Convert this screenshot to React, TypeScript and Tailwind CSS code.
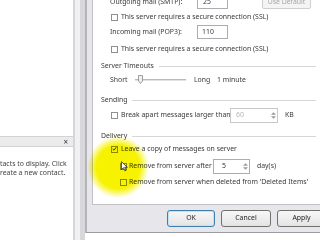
import React from "react";

type BoxProps = { checked?: boolean };

const CheckBox = ({ checked = false }: BoxProps) => (
  <div className="w-[7px] h-[7px] shrink-0 border border-[#8e8f8f] bg-white flex items-center justify-center">
    {checked && (
      <svg viewBox="0 0 7 7" className="w-[6px] h-[6px]">
        <path d="M1 3.4 L2.8 5.2 L6 1.2" fill="none" stroke="#2b2b2b" strokeWidth="1.3" />
      </svg>
    )}
  </div>
);

const SpinArrows = () => (
  <div className="w-[7px] h-full flex flex-col items-center justify-center gap-[1px]">
    <svg viewBox="0 0 6 3" className="w-[5px] h-[3px]">
      <path d="M0 3 L3 0 L6 3 Z" fill="#9a9a9a" />
    </svg>
    <svg viewBox="0 0 6 3" className="w-[5px] h-[3px]">
      <path d="M0 0 L3 3 L6 0 Z" fill="#9a9a9a" />
    </svg>
  </div>
);

const Group = ({ title, className }: { title: string; className: string }) => (
  <div className={`flex items-center pl-[8px] pr-[10px] ${className}`}>
    <span className="whitespace-nowrap">{title}</span>
    <div className="flex-1 ml-[5px] border-t border-[#d6d6d6]" />
  </div>
);

const Button = ({ label, className }: { label: string; className: string }) => (
  <div
    className={`h-[17px] shrink-0 rounded-[3px] border bg-[linear-gradient(#f7f7f7,#e4e4e4)] flex items-center justify-center text-[#1f1f1f] ${className}`}
  >
    {label}
  </div>
);

export default function App() {
  return (
    <div className="w-[320px] h-[240px] bg-white flex overflow-hidden relative font-['Noto_Sans',sans-serif] text-[6.9px] leading-none text-[#3a3a3a]">
      {/* contacts pane (cut off at the left) */}
      <div className="w-[73px] shrink-0 flex flex-col">
        <div className="h-[136px]" />
        <div className="h-[11px] bg-[#ebebeb] border-t border-b border-[#d2d2d2] flex items-center justify-end pr-[5px] text-[8px] text-[#333]">
          ×
        </div>
        <div className="pt-[12px] leading-[9px] whitespace-nowrap text-[#444]">
          <div>tacts to display. Click</div>
          <div>reate a new contact.</div>
        </div>
      </div>

      {/* window frame */}
      <div className="w-[12px] shrink-0 flex">
        <div className="w-[2px] bg-[#d6d6d8]" />
        <div className="w-[5px] bg-[#f1f1f3]" />
        <div className="w-[5px] bg-[#d8d8dc]" />
      </div>

      {/* dialog */}
      <div className="flex-1 flex flex-col">
        <div className="h-[233px] flex flex-col bg-[#e7e7eb] border-l-2 border-b border-[#b4b4b8] border-b-[#9c9ca0]">
          {/* tab page */}
          <div className="ml-[5px] h-[205px] bg-white border-l border-b border-[#c2c2c6] flex flex-col overflow-hidden">
            {/* outgoing */}
            <div className="mt-[-7px] h-[18px] shrink-0 flex items-center pl-[17px]">
              <div className="w-[87px] whitespace-nowrap">Outgoing mail (SMTP):</div>
              <div className="w-[31px] h-[14px] border border-[#abadb3] flex items-center pl-[5px]">25</div>
              <div className="ml-[34px] w-[49px] h-[14px] rounded-[2px] border border-[#cfcfcf] bg-[#f4f4f4] flex items-center justify-center text-[#a8a8a8]">
                Use Default
              </div>
            </div>
            <div className="h-[12px] shrink-0 flex items-center gap-[3px] pl-[18px]">
              <CheckBox />
              <span className="whitespace-nowrap">This server requires a secure connection (SSL)</span>
            </div>
            {/* incoming */}
            <div className="h-[18px] shrink-0 flex items-center pl-[17px]">
              <div className="w-[87px] whitespace-nowrap">Incoming mail (POP3):</div>
              <div className="w-[31px] h-[14px] border border-[#abadb3] flex items-center pl-[4px]">110</div>
            </div>
            <div className="h-[16px] shrink-0 flex items-center gap-[3px] pl-[18px]">
              <CheckBox />
              <span className="whitespace-nowrap">This server requires a secure connection (SSL)</span>
            </div>

            <Group title="Server Timeouts" className="h-[18px] shrink-0" />
            <div className="h-[10px] shrink-0 flex items-center pl-[17px]">
              <div className="w-[25px]">Short</div>
              <div className="w-[51px] h-[8px] relative flex items-center">
                <div className="w-full h-[2px] bg-[#e2e2e2] border-t border-[#b9b9b9]" />
              </div>
              <div className="w-[31px] pl-[8px]">Long</div>
              <div>1 minute</div>
            </div>

            <Group title="Sending" className="mt-[8px] h-[14px] shrink-0" />
            <div className="h-[16px] shrink-0 flex items-center pl-[18px]">
              <CheckBox />
              <span className="w-[112px] pl-[3px] whitespace-nowrap">Break apart messages larger than</span>
              <div className="w-[48px] h-[15px] border border-[#c6c8cc] flex items-center justify-between pl-[5px] text-[#b4b4b4]">
                60
                <SpinArrows />
              </div>
              <span className="ml-[7px]">KB</span>
            </div>

            <Group title="Delivery" className="mt-[6px] h-[14px] shrink-0" />
            <div className="h-[12px] shrink-0 flex items-center gap-[3px] pl-[18px]">
              <CheckBox checked />
              <span className="whitespace-nowrap">Leave a copy of messages on server</span>
            </div>
            <div className="mt-[3px] h-[16px] shrink-0 flex items-center pl-[27px]">
              <CheckBox />
              <span className="w-[86px] pl-[2px] whitespace-nowrap">Remove from server after</span>
              <div className="w-[37px] h-[15px] border border-[#abadb3] flex items-center justify-between pl-[8px] text-[#333]">
                5
                <SpinArrows />
              </div>
              <span className="ml-[7px]">day(s)</span>
            </div>
            <div className="mt-[1px] h-[14px] shrink-0 flex items-center pl-[27px]">
              <CheckBox />
              <span className="pl-[2px] whitespace-nowrap">Remove from server when deleted from 'Deleted Items'</span>
            </div>
          </div>

          {/* buttons */}
          <div className="flex-1 flex items-center gap-[6px] pl-[80px]">
            <Button label="OK" className="w-[48px] border-[#3c7fb1] shadow-[inset_0_0_0_1px_#bfe3f7]" />
            <Button label="Cancel" className="w-[50px] border-[#707070]" />
            <Button label="Apply" className="w-[49px] border-[#707070]" />
          </div>
        </div>
      </div>

      {/* cursor highlight */}
      <div className="absolute left-[88px] top-[136px] w-[60px] h-[62px] rounded-full bg-[radial-gradient(circle,#f6f200_0%,#f6f200_50%,rgba(246,242,0,0)_72%)] mix-blend-multiply" />
      {/* slider thumb */}
      <div className="absolute left-[138px] top-[75px] w-[5px] h-[9px]">
        <svg viewBox="0 0 5 9" className="w-[5px] h-[9px]">
          <path d="M0.5 0.5 H4.5 V6 L2.5 8.5 L0.5 6 Z" fill="#f0f0f0" stroke="#8a8a8a" strokeWidth="0.8" />
        </svg>
      </div>
      {/* mouse pointer */}
      <svg viewBox="0 0 8 12" className="absolute left-[121px] top-[161px] w-[7px] h-[11px]">
        <path d="M0.5 0.5 V9.5 L2.8 7.4 L4.4 11 L5.8 10.4 L4.2 6.9 L7.2 6.9 Z" fill="#ffffff" stroke="#111" strokeWidth="0.8" />
      </svg>
    </div>
  );
}
